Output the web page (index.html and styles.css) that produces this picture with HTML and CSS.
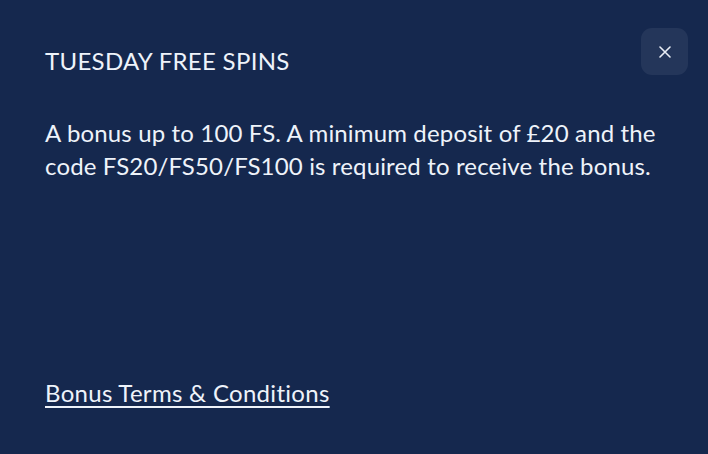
FILE: index.html
```html
<!DOCTYPE html>
<html lang="en">
<head>
<meta charset="utf-8">
<link rel="stylesheet" href="styles.css">
</head>
<body>
<div class="modal">
  <div class="header">
    <h2 class="title">TUESDAY FREE SPINS</h2>
    <button class="close" aria-label="Close">
      <svg width="12" height="12" viewBox="0 0 12 12"><path d="M1 1L11 11M11 1L1 11" stroke="#e8edf5" stroke-width="1.6" stroke-linecap="round"/></svg>
    </button>
  </div>
  <p class="desc">A bonus up to 100 FS. A minimum deposit of £20 and the code FS20/FS50/FS100 is required to receive the bonus.</p>
  <a class="terms" href="#">Bonus Terms &amp; Conditions</a>
</div>
</body>
</html>
```
FILE: styles.css
```css
html, body {
  margin: 0;
  padding: 0;
  background: #15284e;
}
.modal {
  width: 708px;
  height: 454px;
  box-sizing: border-box;
  background: #15284e;
  color: #eef3fa;
  font-family: Lato, "Noto Sans", sans-serif;
  padding: 28px 20px 0 45px;
  display: flex;
  flex-direction: column;
}
.header {
  display: flex;
  justify-content: space-between;
  align-items: flex-start;
}
.title {
  margin: 18px 0 0;
  font-size: 24px;
  line-height: 29px;
  font-weight: 400;
  letter-spacing: 0.3px;
}
.close {
  width: 47px;
  height: 47px;
  border: 0;
  border-radius: 11px;
  background: #24365a;
  display: flex;
  align-items: center;
  justify-content: center;
  padding: 0;
  cursor: pointer;
}
.desc {
  margin: 41px 0 0;
  font-size: 24px;
  line-height: 33px;
  letter-spacing: 0.15px;
  max-width: 630px;
}
.terms {
  margin-top: auto;
  margin-bottom: 47px;
  color: #eef3fa;
  font-size: 24px;
  line-height: 29px;
  letter-spacing: 0.3px;
  align-self: flex-start;
  text-underline-offset: 4px;
  text-decoration-thickness: 2px;
}
```
